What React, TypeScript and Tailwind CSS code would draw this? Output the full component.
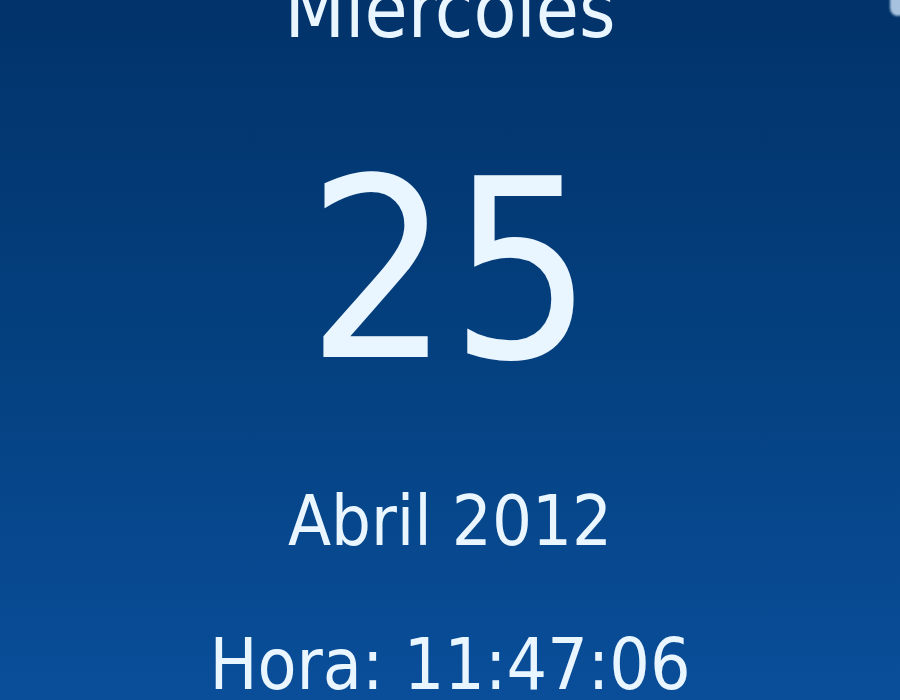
import React from 'react';

const font = { fontFamily: '"DejaVu Sans Condensed", "DejaVu Sans", sans-serif' };

export default function App() {
  return (
    <div
      className="relative w-[900px] h-[700px] overflow-hidden bg-gradient-to-b from-[#02336a] via-[#04407f] to-[#0a4e9a] text-[#eaf6ff]"
      style={font}
    >
      {/* corner of the gadget frame */}
      <div className="absolute right-[-6px] top-[-10px] w-[16px] h-[26px] rounded-full bg-[#cfe6fb]/80 blur-[1px]" />

      <div className="flex flex-col items-center">
        <div className="-mt-[29px] h-[78px] text-[78px] leading-none">Miercoles</div>
        <div className="mt-[97px] h-[250px] text-[250px] leading-none">25</div>
        <div className="mt-[90px] h-[70px] text-[70px] leading-none">Abril 2012</div>
        <div className="mt-[73px] h-[71px] text-[71px] leading-none">Hora: 11:47:06</div>
      </div>
    </div>
  );
}
